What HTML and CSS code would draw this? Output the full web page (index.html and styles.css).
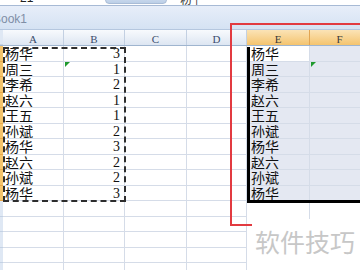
FILE: index.html
```html
<!DOCTYPE html>
<html lang="zh">
<head>
    <meta charset="UTF-8">
    <title>Book1</title>
    <link rel="stylesheet" href="styles.css">
</head>
<body>
    <div class="fbar">
        <span class="fbar-name">21</span>
        <span class="fbar-btn"></span>
        <span class="fbar-text">粉 |</span>
    </div>
    <div class="titlebar"><span class="title">Book1</span></div>

    <div class="sheet">
        <div class="row head">
            <div class="rh"></div>
            <div class="ch">A</div>
            <div class="ch">B</div>
            <div class="ch">C</div>
            <div class="ch">D</div>
            <div class="ch on">E</div>
            <div class="ch on">F</div>
        </div>

        <div class="row">
            <div class="rh on"></div><div class="c">杨华</div><div class="c num">3</div><div class="c"></div><div class="c"></div><div class="c e active">杨华</div><div class="c s"></div>
        </div>
        <div class="row">
            <div class="rh on"></div><div class="c">周三</div><div class="c num flag">1</div><div class="c"></div><div class="c"></div><div class="c e s">周三</div><div class="c s flag"></div>
        </div>
        <div class="row">
            <div class="rh on"></div><div class="c">李希</div><div class="c num">2</div><div class="c"></div><div class="c"></div><div class="c e s">李希</div><div class="c s"></div>
        </div>
        <div class="row">
            <div class="rh on"></div><div class="c">赵六</div><div class="c num">1</div><div class="c"></div><div class="c"></div><div class="c e s">赵六</div><div class="c s"></div>
        </div>
        <div class="row">
            <div class="rh on"></div><div class="c">王五</div><div class="c num">1</div><div class="c"></div><div class="c"></div><div class="c e s">王五</div><div class="c s"></div>
        </div>
        <div class="row">
            <div class="rh on"></div><div class="c">孙斌</div><div class="c num">2</div><div class="c"></div><div class="c"></div><div class="c e s">孙斌</div><div class="c s"></div>
        </div>
        <div class="row">
            <div class="rh on"></div><div class="c">杨华</div><div class="c num">3</div><div class="c"></div><div class="c"></div><div class="c e s">杨华</div><div class="c s"></div>
        </div>
        <div class="row">
            <div class="rh on"></div><div class="c">赵六</div><div class="c num">2</div><div class="c"></div><div class="c"></div><div class="c e s">赵六</div><div class="c s"></div>
        </div>
        <div class="row">
            <div class="rh on"></div><div class="c">孙斌</div><div class="c num">2</div><div class="c"></div><div class="c"></div><div class="c e s">孙斌</div><div class="c s"></div>
        </div>
        <div class="row">
            <div class="rh on"></div><div class="c">杨华</div><div class="c num">3</div><div class="c"></div><div class="c"></div><div class="c e s">杨华</div><div class="c s"></div>
        </div>

        <div class="row">
            <div class="rh"></div><div class="c"></div><div class="c"></div><div class="c"></div><div class="c"></div><div class="c open"></div><div class="c open"></div>
        </div>
        <div class="row">
            <div class="rh"></div><div class="c"></div><div class="c"></div><div class="c"></div><div class="c"></div><div class="c open"></div><div class="c open"></div>
        </div>
        <div class="row">
            <div class="rh"></div><div class="c"></div><div class="c"></div><div class="c"></div><div class="c"></div><div class="c open"></div><div class="c open"></div>
        </div>
        <div class="row">
            <div class="rh"></div><div class="c"></div><div class="c"></div><div class="c"></div><div class="c"></div><div class="c open"></div><div class="c open"></div>
        </div>
        <div class="row">
            <div class="rh"></div><div class="c"></div><div class="c"></div><div class="c"></div><div class="c"></div><div class="c open"></div><div class="c open"></div>
        </div>
    </div>

    <!-- copy marquee, selection and the annotations drawn over the sheet -->
    <div class="ants"></div>
    <div class="sel"></div>
    <div class="redbox"></div>
    <div class="mark">软件技巧</div>
</body>
</html>
```

FILE: styles.css
```css
* {
    box-sizing: border-box;
}
body {
    margin: 0;
    width: 360px;
    height: 270px;
    overflow: hidden;
    position: relative;
    background: #fff;
    font-family: "Noto Sans CJK SC", sans-serif;
}
.fbar {
    height: 6px;
    overflow: hidden;
    display: flex;
    align-items: flex-end;
    border-bottom: 1px solid #a7bad5;
    background: #fff;
}
.fbar-name {
    margin-left: 20px;
    margin-bottom: 1px;
    font: 12px/12px "Liberation Sans", sans-serif;
    color: #222;
}
.fbar-btn {
    margin-left: 72px;
    margin-bottom: 1px;
    width: 62px;
    height: 14px;
    border: 1px solid #a9bcd6;
    border-radius: 0 0 4px 4px;
    background: linear-gradient(#e2ebf7, #bccfe7);
}
.fbar-text {
    margin-left: 13px;
    margin-bottom: 0;
    font-size: 12px;
    line-height: 12px;
    color: #333;
}
.titlebar {
    height: 24px;
    display: flex;
    align-items: flex-end;
    padding-bottom: 3px;
    background: linear-gradient(#e7eef9, #d5e2f3);
    border-bottom: 1px solid #b5c7df;
}
.title {
    margin-left: -7px;
    font: 12px/13px "Liberation Sans", sans-serif;
    color: #7f8ea6;
}
.row {
    display: grid;
    grid-template-columns: 3px 61px 61px 62px 60px 63px 60px;
    height: 15.5px;
}
.row.head {
    height: 16px;
    border-bottom: 1px solid #9fb5cf;
}
.rh {
    background: #dfe8f4;
    border-bottom: 1px solid #c4d2e4;
}
.rh.on {
    background: #f5c46c;
    border-bottom-color: #eaa94a;
}
.ch {
    background: linear-gradient(#f8fafd, #dde6f2);
    border-right: 1px solid #c3d0e2;
    text-align: center;
    padding-top: 3px;
    font: 11px/12px "Liberation Serif", serif;
    color: #3b4d6c;
}
.ch.on {
    background: linear-gradient(#fbe3b6, #f4c46f);
    border-right-color: #e2a552;
    color: #3a3a3a;
}
.c {
    position: relative;
    border-right: 1px solid #d5dce8;
    border-bottom: 1px solid #d5dce8;
    padding-left: 2px;
    font-size: 14px;
    line-height: 15px;
    color: #111;
    white-space: nowrap;
    overflow: hidden;
}
.c.num {
    text-align: right;
    padding-right: 4px;
    font-family: "Liberation Serif", serif;
}
.c.e {
    padding-left: 4px;
}
.c.s {
    background: #e4e8f2;
}
.c.active {
    background: #fff;
}
.c.open {
    border-bottom: none;
}
.flag::before {
    content: "";
    position: absolute;
    left: 1px;
    top: 0;
    border-top: 5px solid #1f9a2e;
    border-right: 5px solid transparent;
}
.ants {
    position: absolute;
    left: 3px;
    top: 47px;
    width: 123px;
    height: 155px;
    border: 2px dashed #2d2d2d;
}
.sel {
    position: absolute;
    left: 247px;
    top: 47px;
    width: 120px;
    height: 156px;
    border-left: 3px solid #000;
    border-bottom: 3px solid #000;
}
.redbox {
    position: absolute;
    left: 230px;
    top: 23px;
    width: 200px;
    height: 203px;
    border: 2px solid #e23a40;
}
.mark {
    position: absolute;
    left: 252px;
    top: 219px;
    right: 0;
    bottom: 0;
    background: #fff;
    padding: 9px 0 0 3px;
    font-size: 25px;
    line-height: 27px;
    color: #c7c7c7;
    white-space: nowrap;
}
```
